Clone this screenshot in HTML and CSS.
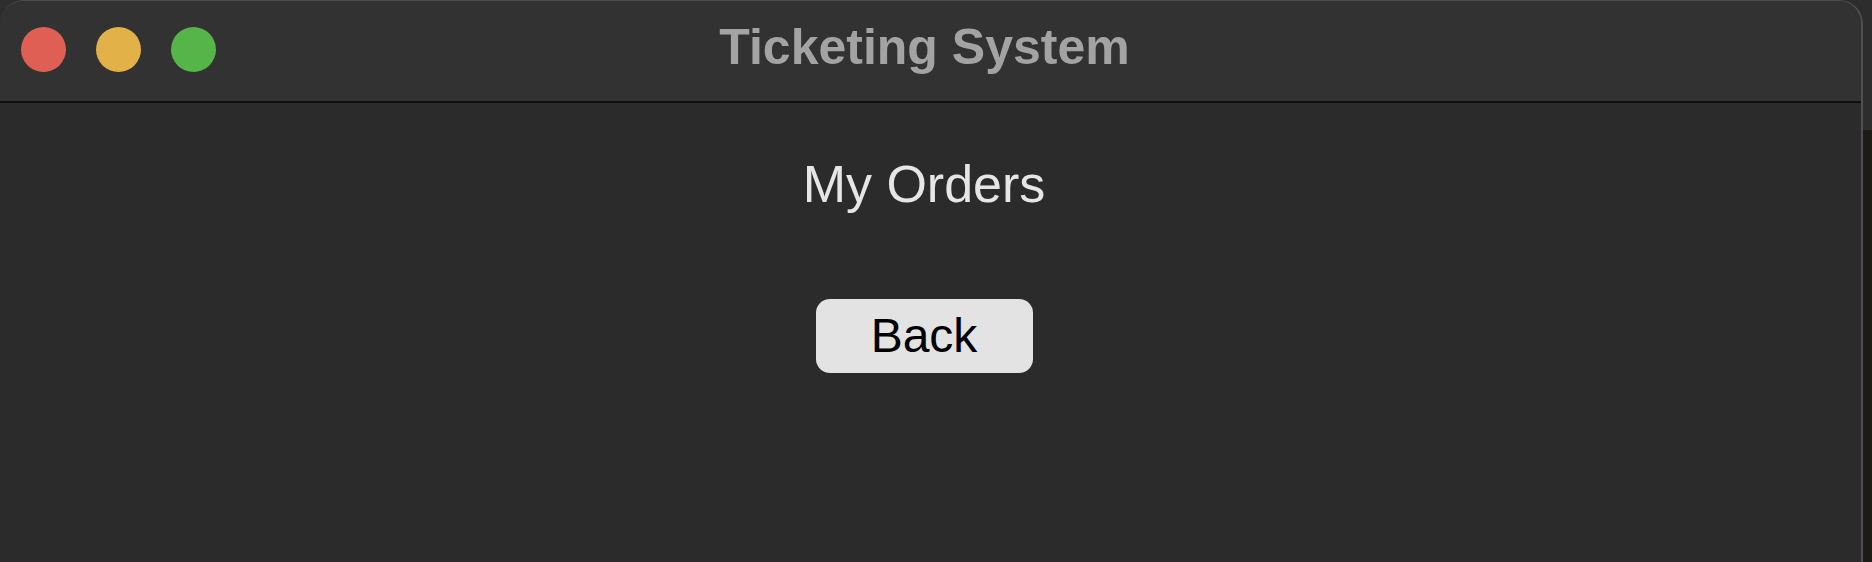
FILE: index.html
```html
<!DOCTYPE html>
<html>
<head>
<meta charset="utf-8">
<title>Ticketing System</title>
<link rel="stylesheet" href="styles.css">
</head>
<body>
<div class="window">
  <div class="titlebar">
    <div class="lights">
      <span class="light red"></span>
      <span class="light yellow"></span>
      <span class="light green"></span>
    </div>
    <div class="title">Ticketing System</div>
  </div>
  <div class="content">
    <h1 class="heading">My Orders</h1>
    <button class="back">Back</button>
  </div>
</div>
</body>
</html>
```

FILE: styles.css
```css
html, body {
  margin: 0;
  padding: 0;
  height: 100%;
}
body {
  background: linear-gradient(#2d2d2d 0, #2d2d2d 130px, #1d1b17 130px);
  font-family: "Liberation Sans", Arial, sans-serif;
  overflow: hidden;
}
.window {
  width: 1863px;
  height: 562px;
  box-sizing: border-box;
  background: #2b2b2b;
  border-top-left-radius: 24px;
  border-top-right-radius: 24px;
  border-top: 1px solid #4c4c4c;
  border-right: 2px solid #505050;
  display: flex;
  flex-direction: column;
  overflow: hidden;
}
.titlebar {
  position: relative;
  height: 100px;
  background: #323232;
  border-bottom: 2px solid #0e0e0e;
  display: flex;
  align-items: center;
  justify-content: center;
  flex-shrink: 0;
}
.lights {
  position: absolute;
  left: 21px;
  top: 26px;
  display: flex;
  gap: 30px;
}
.light {
  width: 45px;
  height: 45px;
  border-radius: 50%;
  display: block;
}
.red { background: #df5f55; }
.yellow { background: #e2b148; }
.green { background: #55b548; }
.title {
  color: #a3a3a3;
  font-weight: bold;
  font-size: 50px;
  line-height: 56px;
  margin-top: -8px;
  margin-right: 12px;
}
.content {
  display: flex;
  flex-direction: column;
  align-items: center;
  padding-top: 51px;
  padding-right: 13px;
}
.heading {
  margin: 0;
  font-weight: normal;
  font-size: 52px;
  line-height: 60px;
  color: #e6e6e6;
}
.back {
  margin-top: 85px;
  width: 217px;
  height: 74px;
  border: none;
  border-radius: 14px;
  background: #e3e3e3;
  color: #000;
  font-family: "Liberation Sans", Arial, sans-serif;
  font-size: 48px;
  line-height: 74px;
  padding: 0;
  display: flex;
  align-items: center;
  justify-content: center;
}
```
